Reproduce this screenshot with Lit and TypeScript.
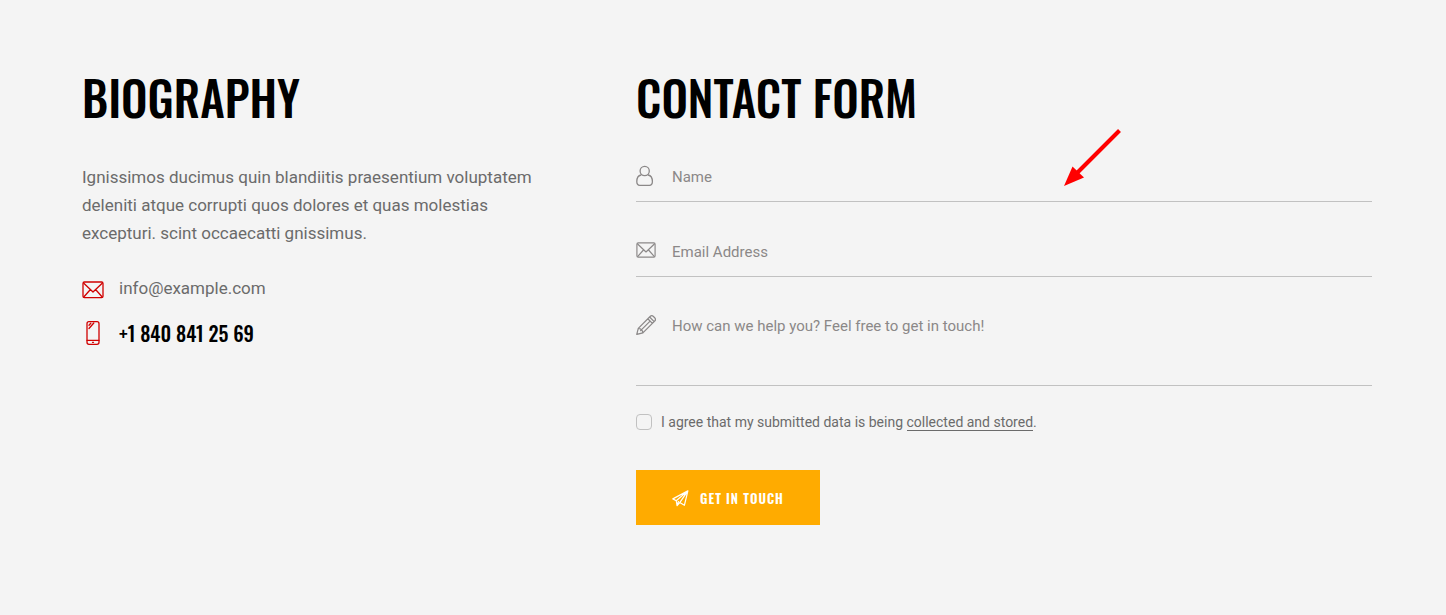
import { LitElement, html, css, svg } from "lit";
import { customElement, property } from "lit/decorators.js";

const icons = {
  mail: svg`<svg viewBox="0 0 22 18"><rect x="1" y="1" width="20" height="15.6" rx="1.4"/><path d="M1.8 2.2 11 11l9.200-8.800M2 15.800l6.200-7M20 15.800l-6.200-7"/></svg>`,
  phone: svg`<svg viewBox="0 0 22 26"><rect x="5" y="1.700" width="12" height="22.600" rx="2"/><path d="M5 20.300h12M10.500 22.300h1M7 8.500l4.800-5.500M7 5.200l1.800-2"/></svg>`,
  user: svg`<svg viewBox="0 0 20 22"><circle cx="8.700" cy="6" r="4.600"/><path d="M5 10C2 10.600.8 13.400.8 16.600c0 2.600.8 3.800 3 3.800h9.600c2.200 0 3-1.200 3-3.800 0-3.200-1.200-6-4.200-6.600"/></svg>`,
  pencil: svg`<svg viewBox="0 0 21 21"><path d="M.8 20.400l1.600-6.400L14.800 1.600a2.500 2.500 0 0 1 3.500 0l1.300 1.300a2.500 2.500 0 0 1 0 3.500L7.200 18.800.8 20.400zM2.400 14c2.700.2 4.500 2.100 4.800 4.800M4.800 16.400 14.800 6.400M12.400 4l4.800 4.800M14.300 2.100l4.800 4.800"/></svg>`,
  plane: svg`<svg viewBox="0 0 18 18"><path d="M16.800.9.900 9.400l3.600 2 .9 5.200 2.800-3.300 4.900 2.900zM4.500 11.400 16.800.9 8.200 13.300M5.400 16.600l1.400-4.400"/></svg>`,
};

@customElement("line-icon")
class LineIcon extends LitElement {
  @property() name: keyof typeof icons = "mail";

  static styles = css`
    :host { display: block; flex: none; }
    svg {
      display: block;
      width: 100%;
      fill: none;
      stroke: currentColor;
      stroke-width: 1.3;
      stroke-linecap: round;
      stroke-linejoin: round;
    }
  `;

  render() {
    return icons[this.name];
  }
}

@customElement("app-root")
class AppRoot extends LitElement {
  static styles = css`
    :host {
      display: block;
      min-height: 100vh;
      box-sizing: border-box;
      padding: 65px 74px 64px 82px;
      background: #f4f4f4;
      color: #6b6b6b;
      font-family: Roboto, sans-serif;
      font-size: 17px;
      line-height: 28px;
    }
    .columns {
      display: grid;
      grid-template-columns: 237fr 368fr;
      column-gap: 80px;
      align-items: start;
    }
    h2 {
      margin: 0 0 34px;
      color: #000;
      font: 500 47px/64px Oswald, "Liberation Sans Narrow", sans-serif;
      text-transform: uppercase;
      white-space: nowrap;
    }
    .bio { margin: 0 0 27px; }
    .contact {
      display: flex;
      align-items: center;
      gap: 15px;
      margin-bottom: 16px;
      color: inherit;
      text-decoration: none;
    }
    .contact line-icon { width: 22px; color: #d00000; }
    .mail line-icon { padding-top: 4px; }
    .tel {
      color: #000;
      font: 500 20px/30px Oswald, "Liberation Sans Narrow", sans-serif;
    }
    .form-column { position: relative; }
    .field {
      display: flex;
      align-items: flex-start;
      gap: 16px;
      margin-bottom: 36px;
      border-bottom: 1px solid #c1c1c1;
      color: #8b8888;
    }
    .field line-icon { width: 20px; padding-top: 2px; }
    .field .envelope { padding-top: 4px; }
    .field input,
    .field textarea {
      display: block;
      flex: 1;
      min-width: 0;
      box-sizing: border-box;
      height: 38px;
      margin: 0;
      padding: 0 0 10px;
      border: 0;
      outline: 0;
      resize: none;
      background: transparent;
      color: inherit;
      font: 15px/28px Roboto, sans-serif;
    }
    .field textarea { height: 72px; overflow: hidden; line-height: 26px; }
    .field ::placeholder { color: #8b8888; opacity: 1; }
    .field.message { margin-bottom: 26px; }
    .agree {
      display: flex;
      align-items: center;
      gap: 9px;
      margin-bottom: 38px;
      font-size: 14px;
      line-height: 20px;
    }
    .agree input {
      appearance: none;
      flex: none;
      width: 16px;
      height: 16px;
      margin: 0;
      border: 1px solid #c1c1c1;
      border-radius: 4px;
    }
    .agree a {
      color: inherit;
      text-decoration: none;
      border-bottom: 1px solid currentColor;
    }
    button {
      display: flex;
      align-items: center;
      gap: 11px;
      padding: 19px 36px 17px;
      border: 0;
      background: #ffab00;
      color: #fff;
      font: 600 13px/19px Oswald, "Liberation Sans Narrow", sans-serif;
      letter-spacing: 1px;
      text-transform: uppercase;
    }
    button line-icon { width: 17px; }
    .arrow {
      position: absolute;
      top: 64px;
      right: 251px;
      width: 58px;
      height: 58px;
      pointer-events: none;
    }
  `;

  render() {
    return html`
      <main class="columns">
        <section>
          <h2>Biography</h2>
          <p class="bio">
            Ignissimos ducimus quin blandiitis praesentium voluptatem deleniti
            atque corrupti quos dolores et quas molestias excepturi. scint
            occaecatti gnissimus.
          </p>
          <a class="contact mail" href="mailto:info@example.com">
            <line-icon name="mail"></line-icon><span>info@example.com</span>
          </a>
          <a class="contact" href="tel:+18408412569">
            <line-icon name="phone"></line-icon><span class="tel">+1 840 841 25 69</span>
          </a>
        </section>
        <section class="form-column">
          <h2>Contact form</h2>
          <form @submit=${(e: Event) => e.preventDefault()}>
            <div class="field">
              <line-icon name="user"></line-icon>
              <input type="text" aria-label="Name" placeholder="Name" />
            </div>
            <div class="field">
              <line-icon class="envelope" name="mail"></line-icon>
              <input type="email" aria-label="Email Address" placeholder="Email Address" />
            </div>
            <div class="field message">
              <line-icon name="pencil"></line-icon>
              <textarea
                aria-label="Message"
                placeholder="How can we help you? Feel free to get in touch!"
              ></textarea>
            </div>
            <div class="agree">
              <input type="checkbox" id="agree" />
              <label for="agree"
                >I agree that my submitted data is being
                <a href="#privacy">collected and stored</a>.</label
              >
            </div>
            <button type="submit"><line-icon name="plane"></line-icon>Get in touch</button>
          </form>
          <svg class="arrow" viewBox="0 0 58 58" aria-hidden="true">
            <path d="M56.500 1.500 12 46" stroke="#f00" stroke-width="4" />
            <path d="M1 57 9.500 37.500 21 48.500z" fill="#f00" />
          </svg>
        </section>
      </main>
    `;
  }
}
